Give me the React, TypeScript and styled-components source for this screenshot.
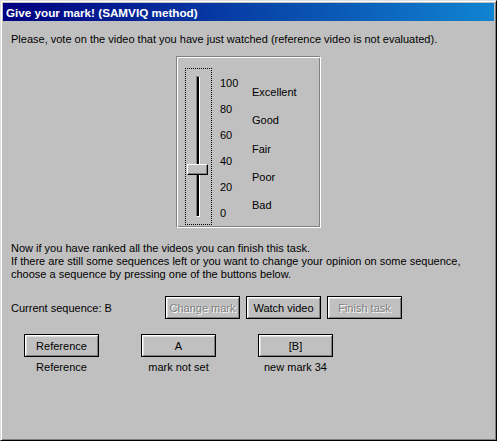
import React from 'react'
import styled, { createGlobalStyle, css } from 'styled-components'

const GlobalStyle = createGlobalStyle`
  html, body {
    margin: 0;
    padding: 0;
    background: #c0c0c0;
  }
  * {
    box-sizing: border-box;
  }
`

const Window = styled.div`
  width: 497px;
  height: 441px;
  background: #c0c0c0;
  border: 1px solid;
  border-color: #dfdfdf #000 #000 #dfdfdf;
  box-shadow: inset 1px 1px #fff, inset -1px -1px #808080;
  padding: 2px;
  display: flex;
  flex-direction: column;
  font-family: 'Liberation Sans', Arial, sans-serif;
  font-size: 11px;
  color: #000;
`

const TitleBar = styled.div`
  height: 18px;
  background: linear-gradient(to right, #000080, #1084d0);
  color: #fff;
  font-weight: bold;
  font-size: 11.7px;
  display: flex;
  align-items: center;
  padding-left: 3px;
  white-space: nowrap;
`

const Body = styled.div`
  flex: 1;
  padding: 12px 0 0 8px;
  display: flex;
  flex-direction: column;
`

const Paragraph = styled.div<{ $top?: number }>`
  margin-top: ${(p) => p.$top ?? 0}px;
  line-height: 13px;
  white-space: nowrap;
`

const GroupBox = styled.div`
  align-self: center;
  margin: 10px 0 0 -8px;
  width: 145px;
  height: 172px;
  border: 1px solid;
  border-color: #808080 #fff #fff #808080;
  box-shadow: inset 1px 1px #fff, inset -1px -1px #808080;
  padding: 11px 0 0 8px;
  display: flex;
`

const FocusRect = styled.div`
  position: relative;
  width: 27px;
  height: 157px;
  border: 1px dotted #000;
`

const Channel = styled.div`
  position: absolute;
  left: 10px;
  top: 7px;
  bottom: 7px;
  width: 4px;
  background: #000;
  border-left: 1px solid #808080;
  border-top: 1px solid #808080;
  border-right: 1px solid #fff;
  border-bottom: 1px solid #fff;
`

const Thumb = styled.div`
  position: absolute;
  left: 1px;
  width: 21px;
  height: 11px;
  background: #c0c0c0;
  border: 1px solid;
  border-color: #fff #000 #000 #fff;
  box-shadow: inset -1px -1px #808080;
`

const Ticks = styled.div<{ $top: number; $height: number; $width?: number }>`
  margin-top: ${(p) => p.$top}px;
  height: ${(p) => p.$height}px;
  width: ${(p) => (p.$width ? `${p.$width}px` : 'auto')};
  display: flex;
  flex-direction: column;
  justify-content: space-between;
  line-height: 13px;
`

const NumberCol = styled(Ticks)`
  margin-left: 8px;
`

const Row = styled.div<{ $top: number }>`
  margin-top: ${(p) => p.$top}px;
  display: flex;
  align-items: center;
`

const RowLabel = styled.div`
  width: 154px;
`

const ButtonGroup = styled.div`
  display: flex;
  gap: 6px;
`

const Button = styled.button<{ disabled?: boolean }>`
  width: 75px;
  height: 23px;
  padding: 0;
  margin: 0;
  background: #c0c0c0;
  border: 1px solid #000;
  box-shadow: inset 1px 1px #fff, inset -1px -1px #808080, inset 2px 2px #dfdfdf;
  font-family: 'Liberation Sans', Arial, sans-serif;
  font-size: 11px;
  color: #000;
  cursor: default;
  ${(p) =>
    p.disabled &&
    css`
      color: #808080;
      text-shadow: 1px 1px #fff;
    `}
`

const SequenceRow = styled.div`
  margin-top: 15px;
  padding-left: 13px;
  display: flex;
  gap: 42px;
`

const Sequence = styled.div`
  width: 75px;
  display: flex;
  flex-direction: column;
  align-items: center;
`

const SequenceNote = styled.div`
  margin-top: 4px;
  line-height: 13px;
  white-space: nowrap;
`

const scale = ['100', '80', '60', '40', '20', '0']
const grades = ['Excellent', 'Good', 'Fair', 'Poor', 'Bad']

const sequences = [
  { name: 'Reference', note: 'Reference' },
  { name: 'A', note: 'mark not set' },
  { name: '[B]', note: 'new mark 34' },
]

export default function App() {
  const mark = 34
  // channel runs from 8px to 149px inside the focus rect
  const thumbTop = 8 + ((100 - mark) / 100) * 141 - 6

  return (
    <>
      <GlobalStyle />
      <Window>
        <TitleBar>Give your mark! (SAMVIQ method)</TitleBar>
        <Body>
          <Paragraph>Please, vote on the video that you have just watched (reference video is not evaluated).</Paragraph>

          <GroupBox>
            <FocusRect>
              <Channel />
              <Thumb style={{ top: thumbTop }} />
            </FocusRect>
            <NumberCol $top={9} $height={143} $width={32}>
              {scale.map((s) => (
                <div key={s}>{s}</div>
              ))}
            </NumberCol>
            <Ticks $top={18} $height={126}>
              {grades.map((g) => (
                <div key={g}>{g}</div>
              ))}
            </Ticks>
          </GroupBox>

          <Paragraph $top={14}>
            Now if you have ranked all the videos you can finish this task.
            <br />
            If there are still some sequences left or you want to change your opinion on some sequence,
            <br />
            choose a sequence by pressing one of the buttons below.
          </Paragraph>

          <Row $top={15}>
            <RowLabel>Current sequence: B</RowLabel>
            <ButtonGroup>
              <Button disabled>Change mark</Button>
              <Button>Watch video</Button>
              <Button disabled>Finish task</Button>
            </ButtonGroup>
          </Row>

          <SequenceRow>
            {sequences.map((s) => (
              <Sequence key={s.name}>
                <Button>{s.name}</Button>
                <SequenceNote>{s.note}</SequenceNote>
              </Sequence>
            ))}
          </SequenceRow>
        </Body>
      </Window>
    </>
  )
}
